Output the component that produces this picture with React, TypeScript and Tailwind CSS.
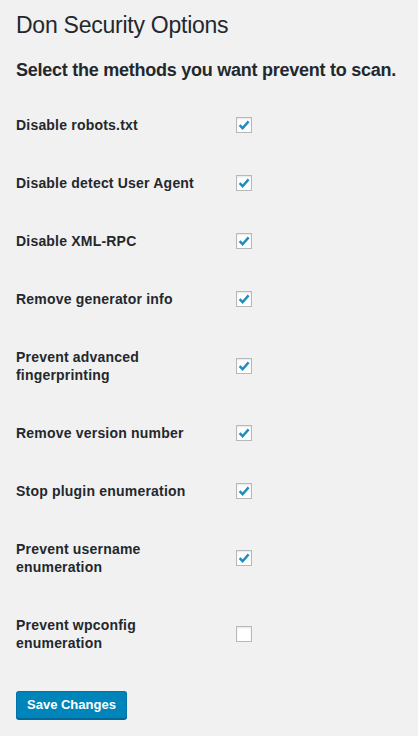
import React, { useState } from 'react';

// Settings rows shown on the page
const OPTIONS: { id: string; label: string; checked: boolean }[] = [
    { id: 'robots', label: 'Disable robots.txt', checked: true },
    { id: 'useragent', label: 'Disable detect User Agent', checked: true },
    { id: 'xmlrpc', label: 'Disable XML-RPC', checked: true },
    { id: 'generator', label: 'Remove generator info', checked: true },
    { id: 'fingerprint', label: 'Prevent advanced fingerprinting', checked: true },
    { id: 'version', label: 'Remove version number', checked: true },
    { id: 'plugin', label: 'Stop plugin enumeration', checked: true },
    { id: 'username', label: 'Prevent username enumeration', checked: true },
    { id: 'wpconfig', label: 'Prevent wpconfig enumeration', checked: false },
];

const CheckBox: React.FC<{ checked: boolean; onToggle: () => void }> = ({ checked, onToggle }) => (
    <button
        type="button"
        onClick={onToggle}
        className="w-4 h-4 flex-shrink-0 bg-white border border-[#b4b9be] shadow-[inset_0_1px_2px_rgba(0,0,0,0.1)] flex items-center justify-center"
    >
        {checked && (
            <svg width="14" height="14" viewBox="0 0 14 14">
                <path d="M2.6 7.2 L5.6 10.2 L11.6 3.4" fill="none" stroke="#1e8cbe" strokeWidth="2.4" strokeLinecap="butt" strokeLinejoin="miter" />
            </svg>
        )}
    </button>
);

const App: React.FC = () => {
    const [values, setValues] = useState<Record<string, boolean>>(
        Object.fromEntries(OPTIONS.map(o => [o.id, o.checked]))
    );

    return (
        <div className="min-h-screen bg-[#f1f1f1] text-[#23282d] pl-4 pr-2 pb-4 font-['Liberation_Sans',Arial,sans-serif]">
            <h1 className="pt-[10px] text-[23px] leading-[30px] font-normal tracking-[-0.25px]">Don Security Options</h1>
            <h2 className="mt-[18px] text-[18px] leading-[24px] font-bold tracking-[-0.25px] whitespace-nowrap">
                Select the methods you want prevent to scan.
            </h2>

            <div className="mt-[14px] flex flex-col">
                {OPTIONS.map(o => (
                    <div key={o.id} className="flex items-center">
                        <div className="w-[200px] mr-[20px] py-5 text-[14px] leading-[18px] font-bold tracking-[0.2px]">{o.label}</div>
                        <CheckBox
                            checked={values[o.id]}
                            onToggle={() => setValues(v => ({ ...v, [o.id]: !v[o.id] }))}
                        />
                    </div>
                ))}
            </div>

            <button
                type="button"
                className="mt-[19px] h-[28px] px-[10px] rounded-[3px] bg-[#0085ba] border border-[#0073aa] border-b-[#006799] shadow-[0_1px_0_#006799] text-white text-[13px] leading-[26px] font-bold"
            >
                Save Changes
            </button>
        </div>
    );
};

export default App;
